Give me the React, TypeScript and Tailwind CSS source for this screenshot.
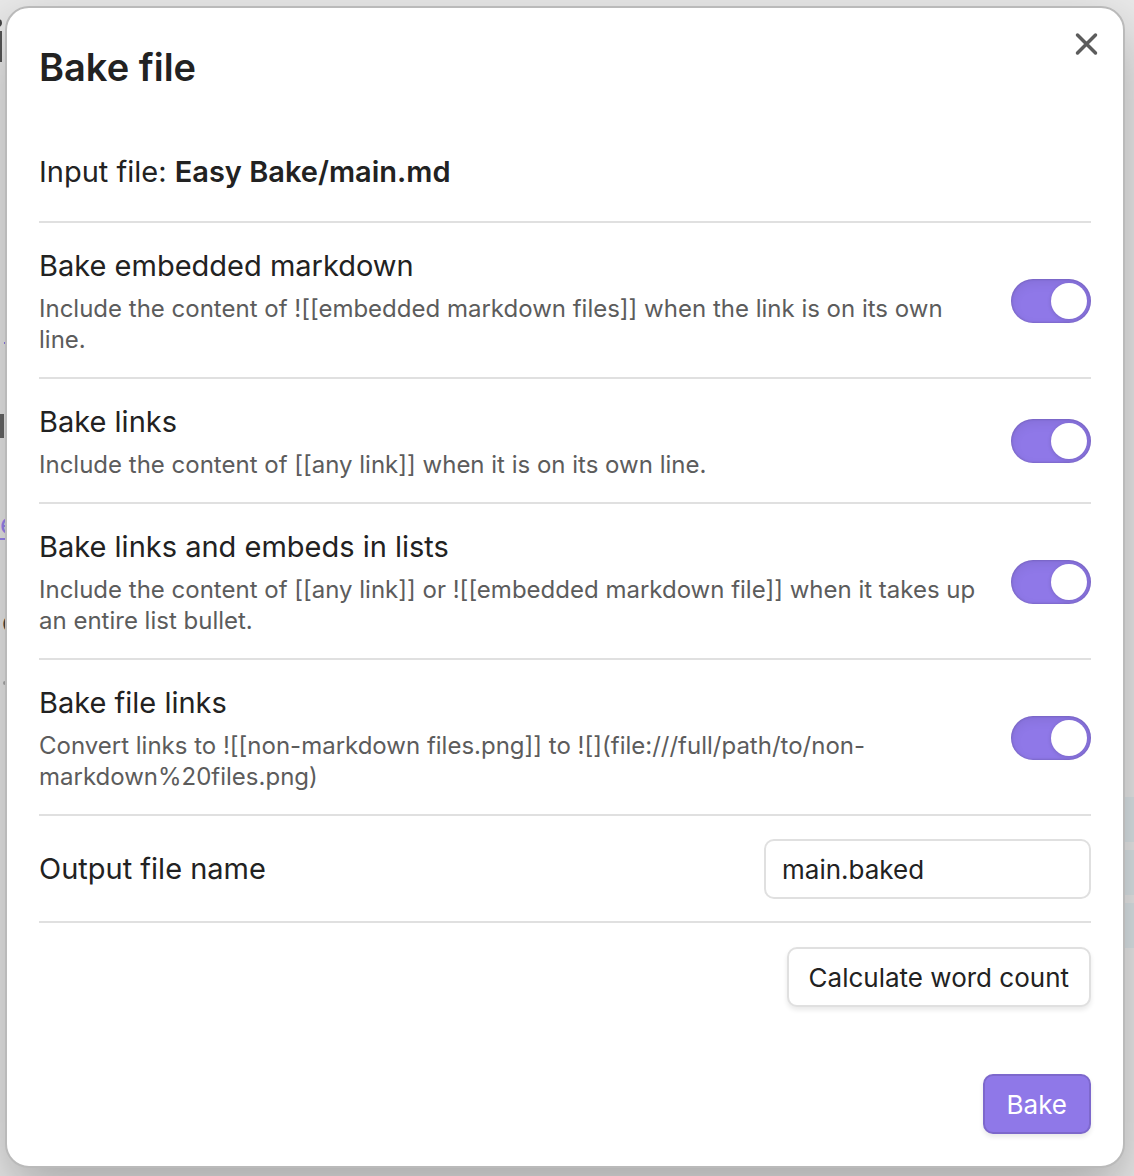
import { useState } from "react";
import type { ReactNode } from "react";

const toggles = [
  {
    id: "embedded",
    name: "Bake embedded markdown",
    desc: "Include the content of ![[embedded markdown files]] when the link is on its own line.",
  },
  {
    id: "links",
    name: "Bake links",
    desc: "Include the content of [[any link]] when it is on its own line.",
  },
  {
    id: "lists",
    name: "Bake links and embeds in lists",
    desc: "Include the content of [[any link]] or ![[embedded markdown file]] when it takes up an entire list bullet.",
  },
  {
    id: "files",
    name: "Bake file links",
    desc: "Convert links to ![[non-markdown files.png]] to ![](file:///full/path/to/non-markdown%20files.png)",
  },
];

function Row({ children }: { children: ReactNode }) {
  return (
    <div className="flex items-center justify-between gap-8 border-t-2 border-[#e0e0e0] pt-[23px] pb-[22px]">
      {children}
    </div>
  );
}

function Toggle({ id, name, desc }: { id: string; name: string; desc: string }) {
  const [on, setOn] = useState(true);
  return (
    <Row>
      <div className="min-w-0 flex-1">
        <label htmlFor={id} className="block text-[29px] leading-[40px]">
          {name}
        </label>
        <p id={id + "-desc"} className="mt-[7px] text-2xl leading-[31px] text-[#5c5c5c]">
          {desc}
        </p>
      </div>
      <input
        id={id}
        type="checkbox"
        role="switch"
        aria-describedby={id + "-desc"}
        checked={on}
        onChange={(e) => setOn(e.target.checked)}
        className="flex h-11 w-20 shrink-0 appearance-none items-center rounded-full bg-[#c8c8c8] px-1 shadow-[inset_0_0_2px_1px_rgba(0,0,0,0.12),inset_0_4px_12px_rgba(0,0,0,0.07)] before:size-9 before:rounded-full before:bg-white before:shadow-[0_1px_4px_rgba(0,0,0,0.15)] checked:justify-end checked:bg-[#8f78e8]"
      />
    </Row>
  );
}

/* Document behind the dialog, of which only the edges show. */
function Backdrop() {
  return (
    <div aria-hidden="true" className="absolute inset-0 overflow-hidden bg-[#e9e9e9]">
      <span className="absolute top-[19px] left-[-6px] size-2 rounded-full bg-[#444]" />
      <span className="absolute top-[31px] left-0 h-[31px] w-[2px] bg-[#555]" />
      <span className="absolute top-[342px] left-[4px] h-[2px] w-3 bg-[#8f78e8]" />
      <span className="absolute top-[414px] left-0 h-6 w-[4px] bg-[#666]" />
      <span className="absolute top-[506px] left-0 text-[28px] leading-9 text-[#9a85f0] underline decoration-2 underline-offset-4">e</span>
      <span className="absolute top-[604px] left-[2px] text-[28px] leading-9 text-[#444]">c</span>
      <span className="absolute top-[681px] left-[3px] size-1 rounded-full bg-[#aaa]" />
      <div className="absolute top-[797px] right-0 flex w-6 flex-col gap-2">
        <span className="h-[45px] bg-[#dce4e7]" />
        <span className="h-[45px] bg-[#dce4e7]" />
        <span className="h-[45px] bg-[#dce4e7]" />
      </div>
    </div>
  );
}

export default function App() {
  const [fileName, setFileName] = useState("main.baked");
  return (
    <div className="relative min-h-screen pt-[6px] pr-[9px] pb-2 pl-[5px] font-['Inter',sans-serif] text-[#222]">
      <Backdrop />
      <div
        role="dialog"
        aria-labelledby="title"
        className="relative rounded-3xl border-2 border-[#bababa] bg-white px-8 pt-8 pb-8 shadow-[0_24px_56px_rgba(0,0,0,0.28)]"
      >
        <button type="button" aria-label="Close" className="absolute top-4 right-4 flex size-10 items-center justify-center text-[#5c5c5c]">
          <svg viewBox="0 0 24 24" className="size-6" fill="none" stroke="currentColor" strokeWidth="3.5" strokeLinecap="round">
            <path d="M2.5 3L20.5 21M20.5 3L2.5 21" />
          </svg>
        </button>
        <h1 id="title" className="text-[38px] leading-[54px] font-semibold">
          Bake file
        </h1>
        <p className="mt-[58px] mb-[29px] text-[29px] leading-[40px]">
          Input file: <strong className="font-semibold">Easy Bake/main.md</strong>
        </p>
        {toggles.map((t) => (
          <Toggle key={t.id} {...t} />
        ))}
        <Row>
          <label htmlFor="output" className="text-[29px] leading-[40px]">
            Output file name
          </label>
          <input
            id="output"
            type="text"
            value={fileName}
            onChange={(e) => setFileName(e.target.value)}
            className="h-[60px] w-[327px] rounded-[10px] border-2 border-[#e0e0e0] bg-white px-4 text-[26px] outline-none"
          />
        </Row>
        <div className="flex justify-end border-t-2 border-[#e0e0e0] pt-6">
          <button
            type="button"
            className="h-[60px] rounded-[10px] border-2 border-[#e0e0e0] bg-white px-5 text-[26px] shadow-[0_3px_5px_rgba(0,0,0,0.09)]"
          >
            Calculate word count
          </button>
        </div>
        <div className="mt-[67px] flex justify-end">
          <button
            type="button"
            className="h-[60px] rounded-[10px] border-2 border-[#7d68cc] bg-[#8f78e8] px-[22px] text-[26px] text-white shadow-[0_3px_5px_rgba(0,0,0,0.09)]"
          >
            Bake
          </button>
        </div>
      </div>
    </div>
  );
}
